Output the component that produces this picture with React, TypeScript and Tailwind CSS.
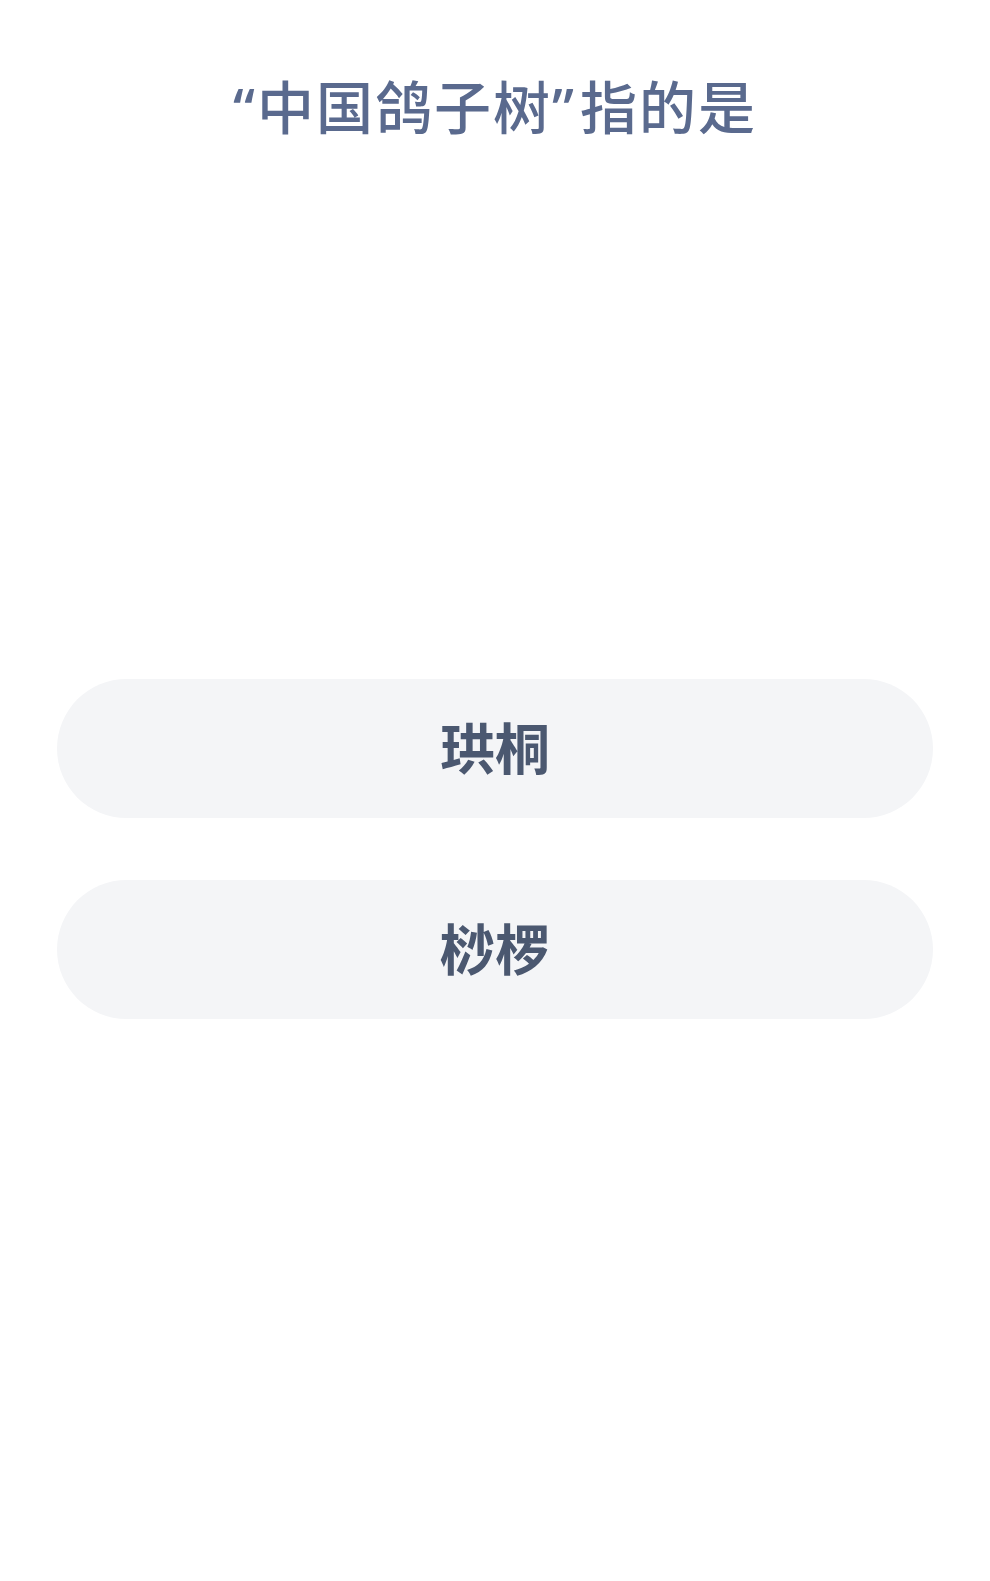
const options = ["珙桐", "桫椤"];

export default function App() {
  return (
    <div
      className="flex min-h-[1581px] w-full flex-col items-center bg-white"
      style={{ fontFamily: '"Noto Sans CJK SC", "Noto Sans", sans-serif' }}
    >
      <h1 className="mt-[68px] h-[72px] text-[57px] font-medium leading-[72px] tracking-[2px] text-[#5a6a8e]">
        <span className="font-['Noto_Sans']">“</span>中国鸽子树<span className="mr-[4px] font-['Noto_Sans']">”</span>指的是
      </h1>
      <div className="mt-[539px] flex w-full flex-col gap-[62px] px-[57px]">
        {options.map((o) => (
          <button
            key={o}
            className="flex h-[139px] w-full items-center justify-center rounded-full bg-[#f4f5f7] pb-[6px] text-[55px] font-bold text-[#4b5870]"
          >
            {o}
          </button>
        ))}
      </div>
    </div>
  );
}
